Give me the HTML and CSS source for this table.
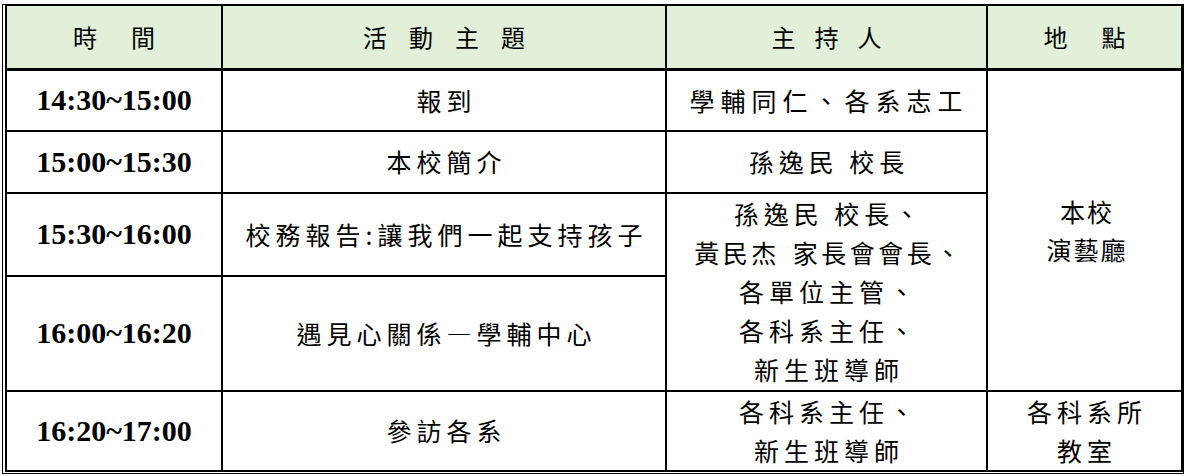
FILE: index.html
```html
<!DOCTYPE html>
<html lang="zh-Hant">
<head>
<meta charset="utf-8">
<title>活動流程</title>
<link rel="stylesheet" href="styles.css">
</head>
<body>
<div class="frame">
  <table class="schedule">
    <colgroup>
      <col class="c-time">
      <col class="c-topic">
      <col class="c-host">
      <col class="c-place">
    </colgroup>
    <thead>
      <tr class="r-head">
        <th><span class="h h-time">時間</span></th>
        <th><span class="h h-topic">活動主題</span></th>
        <th><span class="h h-host">主持人</span></th>
        <th><span class="h h-place">地點</span></th>
      </tr>
    </thead>
    <tbody>
      <tr class="r1">
        <td class="time">14:30~15:00</td>
        <td class="zh">報到</td>
        <td class="zh wide">學輔同仁、各系志工</td>
        <td class="zh place" rowspan="4">本校<br>演藝廳</td>
      </tr>
      <tr class="r2">
        <td class="time">15:00~15:30</td>
        <td class="zh">本校簡介</td>
        <td class="zh">孫逸民 校長</td>
      </tr>
      <tr class="r3">
        <td class="time">15:30~16:00</td>
        <td class="zh">校務報告:讓我們一起支持孩子</td>
        <td class="zh multi" rowspan="2">孫逸民 校長、<br><span class="tight">黃民杰 家長會會長、</span><br>各單位主管、<br>各科系主任、<br>新生班導師</td>
      </tr>
      <tr class="r4">
        <td class="time">16:00~16:20</td>
        <td class="zh">遇見心關係—學輔中心</td>
      </tr>
      <tr class="r5">
        <td class="time">16:20~17:00</td>
        <td class="zh">參訪各系</td>
        <td class="zh multi">各科系主任、<br>新生班導師</td>
        <td class="zh multi">各科系所<br>教室</td>
      </tr>
    </tbody>
  </table>
</div>
</body>
</html>
```

FILE: styles.css
```css
html, body {
  margin: 0;
  padding: 0;
  background: #fff;
}

body {
  font-family: "Noto Sans CJK TC", "Noto Sans", sans-serif;
  color: #000;
}

.frame {
  margin: 4px 0 0 2px;
  width: 1176px;
  border: 1px solid #000;
  padding: 0 2px 1px 2px;
}

.schedule {
  width: 1176px;
  table-layout: fixed;
  border-collapse: collapse;
  border-top: 1px solid #000;
  border-left: 2px solid #000;
  border-right: 2px solid #000;
  border-bottom: 2px solid #000;
}

.c-time { width: 216px; }
.c-topic { width: 444px; }
.c-host { width: 321px; }
.c-place { width: 195px; }

.schedule th,
.schedule td {
  padding: 0;
  text-align: center;
  vertical-align: middle;
  border: 2px solid #000;
}

.schedule th {
  background: #e2efd9;
  border-bottom: 3px solid #000;
  border-top: 1px solid #000;
  font-weight: normal;
  font-size: 24px;
  line-height: 30px;
}

.h { display: inline-block; }
.h-time { letter-spacing: 34px; padding-left: 34px; }
.h-topic { letter-spacing: 22px; padding-left: 22px; }
.h-host { letter-spacing: 19px; padding-left: 19px; }
.h-place { letter-spacing: 34px; padding-left: 34px; }

.r-head { height: 64px; }
.r1 { height: 61px; }
.r2 { height: 62px; }
.r3 { height: 83px; }
.r4 { height: 115px; }
.r5 { height: 80px; }

.time {
  font-family: "Liberation Serif", "Times New Roman", serif;
  font-weight: bold;
  font-size: 30px;
  line-height: 34px;
}

.zh {
  font-size: 25px;
  line-height: 39px;
  letter-spacing: 5px;
}

.schedule td.zh { padding-left: 5px; }

.wide { letter-spacing: 6px; }

.tight { letter-spacing: 3.5px; word-spacing: 4px; }

.place { line-height: 38px; letter-spacing: 2px; }
```
